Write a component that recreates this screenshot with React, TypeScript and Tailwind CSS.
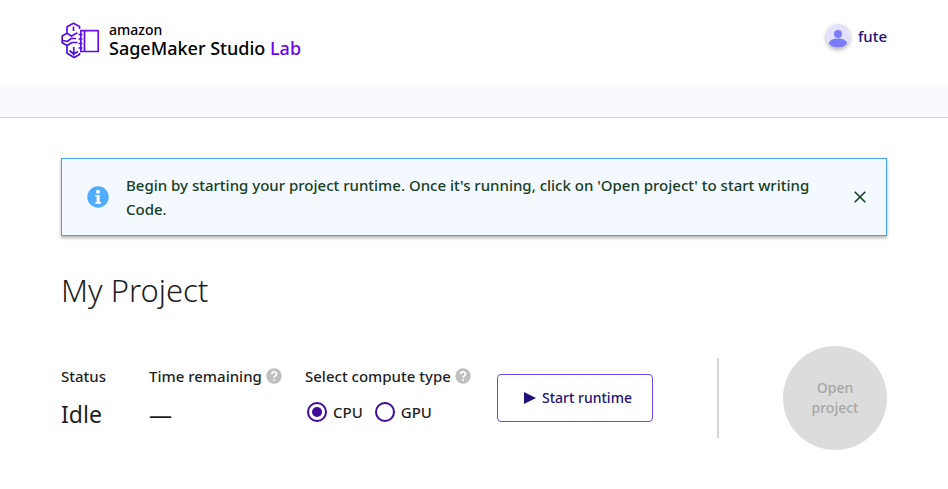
import { useState } from "react";

function LogoMark() {
  return (
    <svg width="40" height="38" viewBox="0 0 40 38" fill="none" aria-hidden="true" className="shrink-0">
      <defs>
        <linearGradient id="mark" x1="0" y1="38" x2="38" y2="0" gradientUnits="userSpaceOnUse">
          <stop stopColor="#3a10d8" />
          <stop offset="1" stopColor="#7a0cf8" />
        </linearGradient>
      </defs>
      <g stroke="url(#mark)" strokeWidth="1.7" strokeLinejoin="round">
        <path d="M18.500 7V4.500L12.500 1.200L6 4.800V11.300L1.200 14V20.700L6 23.500V31.200L13.200 35.500L18.500 32.500V31" />
        <path d="M6 11.300L10.500 14L16.500 10.800M10.500 14V15.500M10.500 16.500L6 19.500L2 18.500" />
        <path d="M12.500 4.500V9" />
        <path d="M6 23.500L11 20.500L16.500 20.500M10.500 16.500H15" />
        <path d="M12.800 25V33.500M12.800 32L8.500 28.500M12.800 32L17 29.500" />
        <path d="M19.800 8.700H37.200V29.500H19.800ZM23.500 8.700V29.500" />
        <path d="M17.500 12.500H21.500M17.500 17H21.500M17.500 21.500H21.500M17.500 26H21.500" />
      </g>
    </svg>
  );
}

function Avatar() {
  return (
    <svg width="24" height="24" viewBox="0 0 24 24" aria-hidden="true" className="rounded-full bg-[#e3e1fb] shadow-[0_2px_4px_rgba(0,0,0,0.3)]">
      <circle cx="12" cy="10" r="4" fill="#7c7cf7" />
      <ellipse cx="12" cy="19" rx="9" ry="4.500" fill="#7c7cf7" />
    </svg>
  );
}

function InfoIcon() {
  return (
    <svg width="22" height="22" viewBox="0 0 22 22" aria-hidden="true" className="shrink-0">
      <circle cx="11" cy="11" r="10.700" fill="#50acff" />
      <circle cx="11" cy="5.800" r="2" fill="#fff" />
      <path d="M8.300 9H12.700V16H14V17.700H8.300V16H9.600V10.600H8.300Z" fill="#fff" />
    </svg>
  );
}

function HelpButton({ label }: { label: string }) {
  return (
    <button type="button" aria-label={label} className="block">
      <svg width="16" height="16" viewBox="0 0 16 16" fill="none" aria-hidden="true">
        <circle cx="8" cy="8" r="7.700" fill="#bfbfbf" />
        <path d="M5.700 6.200C5.700 3.200 10.500 3.200 10.500 6.100C10.500 7.800 8.100 7.900 8.100 9.700" stroke="#fff" strokeWidth="1.800" />
        <circle cx="8.100" cy="12" r="1.100" fill="#fff" />
      </svg>
    </button>
  );
}

export default function App() {
  const [compute, setCompute] = useState("CPU");
  const [showInfo, setShowInfo] = useState(true);

  return (
    <div className="bg-white font-['Noto_Sans',sans-serif] text-[15px] leading-6 text-[#1f1f1f]">
      <header className="flex items-start justify-between px-[61px] pt-[22px] pb-[25px]">
        <a href="#home" className="flex items-center gap-2 text-black">
          <LogoMark />
          <span className="flex flex-col pb-0.5 font-medium">
            <span className="text-sm leading-4">amazon</span>
            <span className="text-lg leading-5">
              SageMaker Studio <span className="text-[#6a05ea]">Lab</span>
            </span>
          </span>
        </a>
        <button type="button" className="flex items-center gap-2 pt-0.5 font-medium text-[#23107a]">
          <Avatar />
          fute
        </button>
      </header>
      <div className="h-[33px] border-b border-[#d5d5d9] bg-[#faf9ff]" />

      <main className="px-[61px] pt-10 pb-10">
        {showInfo && (
          <section className="flex items-center border border-[#43a1fb] bg-[#f4f9ff] py-[14px] pr-4 pl-[25px] text-[#16401f] shadow-[0_2px_3px_rgba(0,0,0,0.3)]">
            <InfoIcon />
            <p className="ml-[17px] flex-1 font-medium">
              Begin by starting your project runtime. Once it's running, click on 'Open project' to start writing Code.
            </p>
            <button type="button" aria-label="Dismiss" onClick={() => setShowInfo(false)} className="ml-6 p-1">
              <svg width="12" height="12" viewBox="0 0 12 12" stroke="currentColor" strokeWidth="1.600" aria-hidden="true">
                <path d="M0.700 0.700L11.300 11.300M11.300 0.700L0.700 11.300" />
              </svg>
            </button>
          </section>
        )}

        <h1 className="mt-[34px] text-[31px] leading-10 font-light">My Project</h1>

        <div className="mt-9 flex items-center justify-between">
          <div className="flex items-start">
            <div className="w-[88px] pb-1">
              <h2 className="font-medium">Status</h2>
              <p className="mt-3 text-[23px] leading-7">Idle</p>
            </div>
            <div className="w-[156px] pb-1">
              <div className="flex items-center gap-1">
                <h2 className="font-medium">Time remaining</h2>
                <HelpButton label="About time remaining" />
              </div>
              <p className="mt-3 text-[23px] leading-7">—</p>
            </div>
            <fieldset className="w-48 pb-1">
              <div className="flex items-center gap-1">
                <span id="compute-label" className="font-medium">Select compute type</span>
                <HelpButton label="About compute types" />
              </div>
              <div role="radiogroup" aria-labelledby="compute-label" className="mt-3 flex gap-3 pl-0.5">
                {["CPU", "GPU"].map((type) => (
                  <label key={type} className="flex items-center gap-1.5 font-medium">
                    <input
                      type="radio"
                      name="compute"
                      checked={compute === type}
                      onChange={() => setCompute(type)}
                      className="size-5 appearance-none rounded-full border-2 border-[#3d0a9c] bg-white bg-clip-content p-[3px] checked:bg-[#3d0a9c]"
                    />
                    {type}
                  </label>
                ))}
              </div>
            </fieldset>
            <button type="button" className="flex h-12 w-[156px] items-center justify-center gap-1.5 self-center rounded border border-[#6b48f0] pl-1.5 text-sm font-medium text-[#23107a]">
              <svg width="12" height="12" viewBox="0 0 12 12" fill="currentColor" aria-hidden="true">
                <path d="M0 0L12 6L0 12Z" />
              </svg>
              Start runtime
            </button>
          </div>
          <div className="flex items-center gap-16">
            <div className="h-20 w-0.5 bg-[#d5d5d5]" />
            <button type="button" disabled className="size-[104px] rounded-full bg-[#dcdcdc] px-6 text-sm leading-5 font-medium text-[#a6a6a6]">
              Open project
            </button>
          </div>
        </div>
      </main>
    </div>
  );
}
